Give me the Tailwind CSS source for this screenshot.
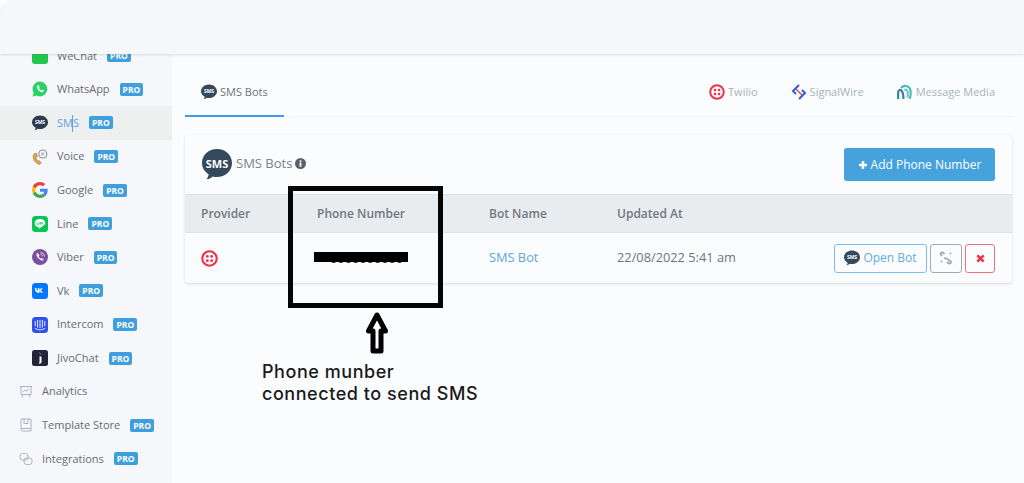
<!DOCTYPE html>
<html lang="en">
<head>
    <meta charset="UTF-8">
    <title>SMS Bots</title>
    <script src="https://cdn.jsdelivr.net/npm/@tailwindcss/browser@4"></script>
</head>
<body class="bg-white">
<div class="relative w-[1024px] h-[483px] overflow-hidden bg-[#fbfcfe] font-['Open_Sans',sans-serif] text-[#6c757d]">

    <!-- Top bar -->
    <header class="relative z-10 h-[54px] bg-[#f5f7f9] rounded-tl-2xl shadow-[0_1px_3px_rgba(0,0,0,0.12)]"></header>

    <div class="flex h-[429px]">
        <!-- Sidebar -->
        <aside class="w-[172px] shrink-0 bg-[#f5f7fa] overflow-hidden text-[11px] text-[#676c71]">
            <div class="-mt-[15px]">
                <div class="flex items-center h-[33.6px] pl-[32px] gap-[9px]">
                    <svg class="w-4 h-4" viewBox="0 0 16 16"><rect width="16" height="16" rx="3" fill="#22c74f"/></svg>
                    <span>WeChat</span><span class="ml-[1px] bg-[#3f9fdc] text-white text-[8.5px] font-bold px-[3px] leading-[13px] rounded-[2px]">PRO</span>
                </div>
                <div class="flex items-center h-[33.6px] pl-[32px] gap-[9px]">
                    <svg class="w-4 h-4" viewBox="0 0 16 16"><path d="M8 0.500a7.400 7.400 0 0 0-6.300 11.200L0.600 15.500l3.900-1A7.400 7.400 0 1 0 8 0.500z" fill="#25d366"/><path d="M5.600 4.200c-.9.700-1 1.900-.4 3.100.8 1.600 2.200 3 3.900 3.700 1.200.4 2.300.1 2.800-.9l-.1-.7-1.600-.8-.8.800c-1-.4-1.900-1.300-2.400-2.300l.7-.8-.7-1.800z" fill="#fff"/></svg>
                    <span>WhatsApp</span><span class="ml-[1px] bg-[#3f9fdc] text-white text-[8.5px] font-bold px-[3px] leading-[13px] rounded-[2px]">PRO</span>
                </div>
                <div class="flex items-center h-[33.6px] pl-[32px] gap-[9px] bg-[#eef0f0] text-[#5e9ff0]">
                    <svg class="w-4 h-4" viewBox="0 0 16 16"><path d="M8 0.500c4.400 0 8 2.900 8 6.800s-3.600 6.800-8 6.800c-.8 0-1.500-.1-2.200-.3-.9.800-2 1.300-3.300 1.400.7-.7 1.100-1.500 1.200-2.400C1.600 11.600 0 9.600 0 7.300 0 3.400 3.600.5 8 .5z" fill="#2d3b4e"/><text x="8" y="9.300" text-anchor="middle" font-size="5" font-weight="700" fill="#fff">SMS</text></svg>
                    <span class="relative">SMS<span class="absolute left-[15px] top-0 w-px h-[17px] bg-[#5e9ff0]"></span></span><span class="ml-[1px] bg-[#3f9fdc] text-white text-[8.5px] font-bold px-[3px] leading-[13px] rounded-[2px]">PRO</span>
                </div>
                <div class="flex items-center h-[33.6px] pl-[32px] gap-[9px]">
                    <svg class="w-4 h-4" viewBox="0 0 16 16"><path d="M2.500 4.500C.8 6 .7 8.500 2 11c1.200 2.300 3.300 4 5.500 4.500l1.800-1.800-2.600-2.500-1.300.7C4.600 10.600 4.100 9.400 4.100 8.200l1.300-.7-1-3.400z" fill="#e8a33d" stroke="#7b6a4f" stroke-width=".5"/><circle cx="10.800" cy="5" r="4" fill="none" stroke="#8a8f94" stroke-width="1.100"/><path d="M9 4.200h3.600M9 5.800h2.600" stroke="#8a8f94" stroke-width=".8"/></svg>
                    <span>Voice</span><span class="ml-[1px] bg-[#3f9fdc] text-white text-[8.5px] font-bold px-[3px] leading-[13px] rounded-[2px]">PRO</span>
                </div>
                <div class="flex items-center h-[33.6px] pl-[32px] gap-[9px]">
                    <svg class="w-4 h-4" viewBox="0 0 48 48"><path fill="#ea4335" d="M24 9.500c3.500 0 6.700 1.200 9.200 3.600l6.900-6.900C35.900 2.400 30.500 0 24 0 14.600 0 6.500 5.400 2.600 13.200l8 6.200C12.500 13.700 17.800 9.500 24 9.500z"/><path fill="#4285f4" d="M47 24.500c0-1.600-.2-3.100-.4-4.500H24v9h12.900c-.6 3-2.200 5.500-4.700 7.200l7.700 6C44.400 37.900 47 31.800 47 24.500z"/><path fill="#fbbc05" d="M10.500 28.600c-.5-1.400-.8-3-.8-4.600s.3-3.200.8-4.600l-8-6.200C.9 16.500 0 20.100 0 24s.9 7.500 2.600 10.800z"/><path fill="#34a853" d="M24 48c6.500 0 11.900-2.100 15.900-5.800l-7.700-6c-2.200 1.500-4.900 2.300-8.200 2.300-6.200 0-11.500-4.200-13.400-9.900l-8 6.200C6.500 42.600 14.600 48 24 48z"/></svg>
                    <span>Google</span><span class="ml-[1px] bg-[#3f9fdc] text-white text-[8.5px] font-bold px-[3px] leading-[13px] rounded-[2px]">PRO</span>
                </div>
                <div class="flex items-center h-[33.6px] pl-[32px] gap-[9px]">
                    <svg class="w-4 h-4" viewBox="0 0 16 16"><rect width="16" height="16" rx="3.500" fill="#06c755"/><path d="M8 3c-3 0-5.300 1.900-5.300 4.200 0 2 1.700 3.700 4.100 4.100l-.2 1.400c2-.9 3.900-2.100 5.200-3.400.9-.8 1.500-1.400 1.500-2.100C13.300 4.900 11 3 8 3z" fill="#fff"/><path d="M5 6v2.500h1.300M7.200 6v2.500M8.500 8.500V6l1.800 2.500V6" stroke="#06c755" stroke-width=".7" fill="none"/></svg>
                    <span>Line</span><span class="ml-[1px] bg-[#3f9fdc] text-white text-[8.5px] font-bold px-[3px] leading-[13px] rounded-[2px]">PRO</span>
                </div>
                <div class="flex items-center h-[33.6px] pl-[32px] gap-[9px]">
                    <svg class="w-4 h-4" viewBox="0 0 16 16"><circle cx="8" cy="8" r="8" fill="#7b519d"/><path d="M5.200 4c-.8.600-.9 1.500-.5 2.600.8 2 2.300 3.700 4.300 4.700 1 .4 2 .3 2.500-.6l-.1-.6-1.600-1-.8.700c-1-.5-1.800-1.300-2.300-2.400l.7-.7-.9-1.700z" fill="#fff"/><path d="M8.500 3.500c2.200 0 3.900 1.700 3.900 3.900M8.500 5.200c1.200 0 2.200 1 2.200 2.200" stroke="#fff" stroke-width=".7" fill="none"/></svg>
                    <span>Viber</span><span class="ml-[1px] bg-[#3f9fdc] text-white text-[8.5px] font-bold px-[3px] leading-[13px] rounded-[2px]">PRO</span>
                </div>
                <div class="flex items-center h-[33.6px] pl-[32px] gap-[9px]">
                    <svg class="w-4 h-4" viewBox="0 0 16 16"><rect width="16" height="16" rx="3.500" fill="#0077ff"/><path d="M2.800 5h1.500c.1 1.600.9 2.700 1.600 2.900V5h1.400v1.900c.7-.1 1.400-.9 1.700-1.900h1.400c-.2 1.200-1 2.100-1.700 2.500.7.300 1.600 1.100 2 2.500h-1.500c-.3-.9-1-1.600-1.900-1.700V10h-.2C4.800 10 3 8.200 2.800 5z" fill="#fff"/></svg>
                    <span>Vk</span><span class="ml-[1px] bg-[#3f9fdc] text-white text-[8.5px] font-bold px-[3px] leading-[13px] rounded-[2px]">PRO</span>
                </div>
                <div class="flex items-center h-[33.6px] pl-[32px] gap-[9px]">
                    <svg class="w-4 h-4" viewBox="0 0 16 16"><rect width="16" height="16" rx="3.500" fill="#2f50f0"/><path d="M3.200 4v5M5.600 3v7.500M8 3v8M10.400 3v7.500M12.800 4v5M3 11.300c3 2 7 2 10 0" stroke="#fff" stroke-width=".9" fill="none"/></svg>
                    <span>Intercom</span><span class="ml-[1px] bg-[#3f9fdc] text-white text-[8.5px] font-bold px-[3px] leading-[13px] rounded-[2px]">PRO</span>
                </div>
                <div class="flex items-center h-[33.6px] pl-[32px] gap-[9px]">
                    <svg class="w-4 h-4" viewBox="0 0 16 16"><rect width="16" height="16" rx="2.500" fill="#23233a"/><path d="M7.500 6.500h2v5.500c0 1-.7 1.700-2.500 1.700v-1.200c.4 0 .5-.2.500-.6z" fill="#fff"/><path d="M7.300 2.500l1.500 2" stroke="#3fc56b" stroke-width="1"/></svg>
                    <span>JivoChat</span><span class="ml-[1px] bg-[#3f9fdc] text-white text-[8.5px] font-bold px-[3px] leading-[13px] rounded-[2px]">PRO</span>
                </div>
                <div class="flex items-center h-[33.6px] pl-[19px] gap-[9px]">
                    <svg class="w-[14px] h-[14px] text-[#aeb4ba]" viewBox="0 0 14 14" fill="none" stroke="currentColor" stroke-width="1"><path d="M1 1.500h12M2 1.500v8h10v-8M4 9.500l-1 3M10 9.500l1 3M4 7l2-2 1.500 1L10 4"/></svg>
                    <span>Analytics</span>
                </div>
                <div class="flex items-center h-[33.6px] pl-[19px] gap-[9px]">
                    <svg class="w-[14px] h-[14px] text-[#aeb4ba]" viewBox="0 0 14 14" fill="none" stroke="currentColor" stroke-width="1"><path d="M2 1h10v12H3.500A1.500 1.500 0 0 1 2 11.500zM2 10.500h10M5 1v4.500h4V1"/></svg>
                    <span>Template Store</span><span class="ml-[1px] bg-[#3f9fdc] text-white text-[8.5px] font-bold px-[3px] leading-[13px] rounded-[2px]">PRO</span>
                </div>
                <div class="flex items-center h-[33.6px] pl-[19px] gap-[9px]">
                    <svg class="w-[14px] h-[14px] text-[#aeb4ba]" viewBox="0 0 14 14" fill="none" stroke="currentColor" stroke-width="1"><rect x="1" y="1.500" width="8" height="6.500" rx="2.500"/><rect x="5" y="6" width="8" height="6.500" rx="2.500"/></svg>
                    <span>Integrations</span><span class="ml-[1px] bg-[#3f9fdc] text-white text-[8.5px] font-bold px-[3px] leading-[13px] rounded-[2px]">PRO</span>
                </div>
            </div>
        </aside>

        <!-- Main -->
        <main class="flex-1 pl-[13px] pr-[12px] pt-[14px]">
            <!-- Tabs -->
            <nav class="flex items-center justify-between h-[49px] border-b border-[#f1f3f5] text-[11px]">
                <div class="flex items-center gap-[3px] w-[99px] h-[49px] pl-[16px] pt-[2px] border-b-2 border-[#3d9be9] text-[#6c757d]">
                    <svg class="w-4 h-4" viewBox="0 0 16 16"><path d="M8 0.500c4.400 0 8 2.900 8 6.800s-3.600 6.800-8 6.800c-.8 0-1.500-.1-2.200-.3-.9.800-2 1.300-3.300 1.400.7-.7 1.100-1.500 1.200-2.400C1.600 11.600 0 9.600 0 7.300 0 3.400 3.600.5 8 .5z" fill="#34495e"/><text x="8" y="9.300" text-anchor="middle" font-size="5" font-weight="700" fill="#fff">SMS</text></svg>
                    <span>SMS Bots</span>
                </div>
                <div class="flex items-center pr-[17px] text-[#a9b1b9]">
                    <svg class="w-4 h-4 mr-[3px]" viewBox="0 0 16 16"><circle cx="8" cy="8" r="6.800" fill="none" stroke="#f22f46" stroke-width="2"/><circle cx="6" cy="6" r="1.300" fill="#f22f46"/><circle cx="10" cy="6" r="1.300" fill="#f22f46"/><circle cx="6" cy="10" r="1.300" fill="#f22f46"/><circle cx="10" cy="10" r="1.300" fill="#f22f46"/></svg>
                    <span>Twilio</span>
                    <svg class="w-4 h-4 ml-[33px] mr-[3px]" viewBox="0 0 16 16" fill="none" stroke-width="2"><path d="M8 1L2 7l3 3" stroke="#2a5bea"/><path d="M8 15l6-6-3-3" stroke="#2a5bea"/><path d="M5 5l6 6" stroke="#ef4444" stroke-width="1.500"/></svg>
                    <span>SignalWire</span>
                    <svg class="w-[17px] h-[17px] ml-[32px] mr-[3px]" viewBox="0 0 16 16" fill="none" stroke-width="2"><path d="M2 14V8c0-2 2-3 3-2s2 3 2 8" stroke="#3d7ea6"/><path d="M5 4c1-3 6-3 8 0 1 2 1 6 0 10" stroke="#45c4a0"/><path d="M8 6c1-1 2-1 3 1v6" stroke="#7fb7d6"/></svg>
                    <span>Message Media</span>
                </div>
            </nav>

            <!-- Card -->
            <section class="mt-[18px] bg-[#fbfcfe] rounded-[4px] shadow-[0_1px_3px_rgba(0,0,0,0.14)] overflow-hidden">
                <div class="flex items-center justify-between h-[59px] pl-[16px] pr-[17px]">
                    <div class="flex items-center text-[13px] text-[#7a8086] pb-[2px]">
                        <svg class="w-[32px] h-[32px] mr-[3px]" viewBox="0 0 32 32"><path d="M16 1c8.300 0 15 6 15 14s-6.700 14-15 14c-1.500 0-3-.2-4.300-.6-1.500 1.600-3.700 2.600-6.200 2.600 1.200-1.300 2-2.900 2.200-4.700C3.500 23.700 1 19.600 1 15 1 7 7.700 1 16 1z" fill="#34495e"/><text x="16" y="19.500" text-anchor="middle" font-size="11" font-weight="700" fill="#fff">SMS</text></svg>
                        <span>SMS Bots</span>
                        <svg class="w-[11px] h-[11px] ml-[3px]" viewBox="0 0 12 12"><circle cx="6" cy="6" r="6" fill="#5a6066"/><rect x="5" y="5" width="2" height="4.500" fill="#fff"/><rect x="5" y="2.500" width="2" height="1.700" fill="#fff"/></svg>
                    </div>
                    <button class="flex items-center justify-center w-[151px] h-[33px] bg-[#45a2dc] text-white text-[12px] rounded-[3px]">
                        <svg class="w-[10px] h-[10px] mr-[3px]" viewBox="0 0 10 10"><path d="M5 1v8M1 5h8" stroke="#fff" stroke-width="2.500"/></svg>Add Phone Number
                    </button>
                </div>
                <div class="grid grid-cols-[116px_172px_128px_1fr] items-center h-[39px] pl-[16px] bg-[#e9ecef] border-y border-[#dfe3e6] text-[12px] font-semibold text-[#707880]">
                    <span>Provider</span><span>Phone Number</span><span>Bot Name</span><span>Updated At</span>
                </div>
                <div class="grid grid-cols-[116px_172px_128px_1fr] items-center h-[50px] pl-[16px] text-[12.8px]">
                    <svg class="w-[17px] h-[17px]" viewBox="0 0 16 16"><circle cx="8" cy="8" r="6.800" fill="none" stroke="#f22f46" stroke-width="2"/><circle cx="6" cy="6" r="1.300" fill="#f22f46"/><circle cx="10" cy="6" r="1.300" fill="#f22f46"/><circle cx="6" cy="10" r="1.300" fill="#f22f46"/><circle cx="10" cy="10" r="1.300" fill="#f22f46"/></svg>
                    <!-- number sits under the marker bar, only the foot of the digits shows -->
                    <span class="pl-[13px] pt-[1px] text-[#333]">0000000000</span>
                    <span class="text-[#5ba8dc]">SMS Bot</span>
                    <div class="flex items-center justify-between pr-[17px]">
                        <span class="text-[#6c757d]">22/08/2022 5:41 am</span>
                        <div class="flex items-center gap-[3px] text-[12px]">
                            <button class="flex items-center justify-center w-[93px] h-[29px] border border-[#7dbbe8] rounded-[3px] text-[#62ace0]">
                                <svg class="w-4 h-4 mr-[3px]" viewBox="0 0 16 16"><path d="M8 0.500c4.400 0 8 2.900 8 6.800s-3.600 6.800-8 6.800c-.8 0-1.500-.1-2.200-.3-.9.800-2 1.300-3.300 1.400.7-.7 1.100-1.500 1.200-2.400C1.600 11.600 0 9.600 0 7.300 0 3.400 3.600.5 8 .5z" fill="#34495e"/><text x="8" y="9.300" text-anchor="middle" font-size="5" font-weight="700" fill="#fff">SMS</text></svg>Open Bot
                            </button>
                            <button class="flex items-center justify-center w-[32px] h-[29px] border border-[#a5aaae] rounded-[3px]">
                                <svg class="w-[14px] h-[14px]" viewBox="0 0 14 14" fill="none" stroke="#a0a5a9" stroke-width="1.800"><path d="M3 5L1.800 3.500a1.500 1.500 0 0 1 2-2L5.500 3M9 8.500l2.800 2a1.500 1.500 0 0 1-2 2L8 11M5 7l4 1M3 10l-1 1M11 3l1-1"/></svg>
                            </button>
                            <button class="flex items-center justify-center w-[30px] h-[29px] border border-[#ee7180] rounded-[3px]">
                                <svg class="w-[9px] h-[9px]" viewBox="0 0 10 10"><path d="M1.500 1.500l7 7M8.500 1.500l-7 7" stroke="#ef3049" stroke-width="2.800"/></svg>
                            </button>
                        </div>
                    </div>
                </div>
            </section>
        </main>
    </div>

    <!-- Hand drawn annotation over the table -->
    <div class="absolute left-[288px] top-[186px] w-[155px] h-[122px] border-[5px] border-[#050505]"></div>
    <div class="absolute left-[314px] top-[252px] w-[94px] h-[10px] bg-black"></div>
    <svg class="absolute left-[365px] top-[312px] w-[24px] h-[42px]" viewBox="0 0 24 42" fill="none" stroke="#000" stroke-width="5" stroke-linejoin="round"><path d="M12 3L3.500 19H8v20h8V19h4.500z"/></svg>
    <p class="absolute left-[262px] top-[361px] text-[18px] leading-[21.500px] tracking-[0.55px] font-medium text-[#1a1a1a] font-['Inter',sans-serif]">Phone munber<br>connected to send SMS</p>
</div>
</body>
</html>
